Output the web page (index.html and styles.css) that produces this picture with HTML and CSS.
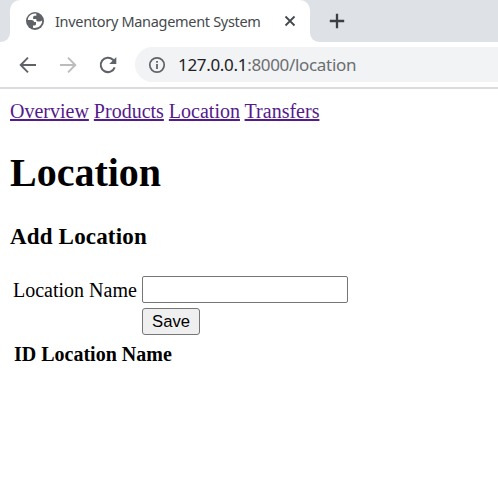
FILE: index.html
```html
<!DOCTYPE html>
<html lang="en">
<head>
<meta charset="utf-8">
<title>Inventory Management System</title>
<link rel="stylesheet" href="styles.css">
</head>
<body>
<header class="browser">
  <div class="tabs">
    <div class="edge edge-left"></div>
    <div class="tab">
      <svg class="globe" viewBox="0 0 20 20"><circle cx="10" cy="10" r="9" fill="#5f6368"/><path d="M11.3 2.7C7.2 2 3.2 5 2.8 8.9h3.7c1.5 0 2.5.8 2.5 2.2h2v1.8c0 .8-.6 1.5-1.5 1.5H8v2.4c3.5 1 7.6-1 8.8-4.7.3-.9.4-1.8.3-2.6-.7.6-1.5.9-2.5.9h-1.8c-.9 0-1.5-.7-1.5-1.6V8.1H8.1V6.4c0-1 .7-1.7 1.7-1.7h1.5z" fill="#fff"/></svg>
      <span class="tab-title">Inventory Management System</span>
      <svg class="close" viewBox="0 0 12 12"><path d="M1.5 1.5l9 9M10.5 1.5l-9 9" stroke="#45494d" stroke-width="1.8"/></svg>
    </div>
    <div class="edge edge-right">
      <svg class="plus" viewBox="0 0 16 16"><path d="M8 .8v14.4M.8 8h14.4" stroke="#3c4043" stroke-width="2.3"/></svg>
    </div>
  </div>
  <div class="toolbar">
    <svg class="nav" viewBox="0 0 18 18"><path d="M17 9H2M9 1.7L1.7 9 9 16.3" fill="none" stroke="#5f6368" stroke-width="1.9"/></svg>
    <svg class="nav" viewBox="0 0 18 18"><path d="M1 9h15M9 1.7L16.3 9 9 16.3" fill="none" stroke="#babcbe" stroke-width="1.9"/></svg>
    <svg class="nav" viewBox="0 0 18 18"><path d="M15.7 11.3A7.2 7.2 0 1 1 14 3.8l1.3 1.4" fill="none" stroke="#5f6368" stroke-width="2"/><path d="M17.3 1v7h-7z" fill="#5f6368"/></svg>
    <div class="address">
      <svg class="info" viewBox="0 0 18 18"><circle cx="9" cy="9" r="7.2" fill="none" stroke="#5f6368" stroke-width="1.7"/><path d="M9 8v5M9 5v1.8" stroke="#5f6368" stroke-width="1.8"/></svg>
      <span class="url"><span class="host">127.0.0.1</span>:8000/location</span>
    </div>
  </div>
</header>
<main>
  <nav><a href="#">Overview</a> <a href="#">Products</a> <a href="#">Location</a> <a href="#">Transfers</a></nav>
  <h1>Location</h1>
  <h3>Add Location</h3>
  <form>
    <label for="name">Location Name</label>
    <input id="name" type="text">
    <button type="button">Save</button>
  </form>
  <div class="list-head"><span>ID</span> <span>Location Name</span></div>
</main>
</body>
</html>
```
FILE: styles.css
```css
* { box-sizing: border-box; }
body { margin: 0; background: #fff; color: #000; font: 20px/23px "Liberation Serif", serif; overflow: hidden; }
svg { display: block; flex: none; }
.browser { height: 89px; border-bottom: 2px solid #dadce0; }
.tabs { display: flex; height: 42px; background: linear-gradient(#dee1e6 0 10px, #fff 10px); }
.edge { background: #dee1e6; }
.edge-left { width: 10px; border-bottom-right-radius: 9px; }
.edge-right { flex: 1; border-bottom-left-radius: 9px; padding: 13px 0 0 19px; }
.tab { width: 300px; display: flex; align-items: center; padding: 0 14px 0 15px; background: #fff; border-radius: 10px 10px 0 0; }
.globe { width: 20px; height: 20px; }
.tab-title { flex: 1; margin-left: 10px; font: 14.5px/20px "Noto Sans", sans-serif; color: #45494d; white-space: nowrap; letter-spacing: -.31px; }
.close { width: 12px; height: 12px; }
.plus { width: 16px; height: 16px; }
.toolbar { display: flex; align-items: center; height: 45px; padding-left: 19px; gap: 22px; }
.nav { width: 18px; height: 18px; }
.address { display: flex; align-items: center; flex: 1; height: 35px; padding-left: 13px; margin-left: -4px; background: #f1f3f4; border-radius: 18px 0 0 18px; }
.info { width: 18px; height: 18px; }
.url { margin-left: 12px; font: 17px/24px "Noto Sans", sans-serif; color: #6b6e72; white-space: nowrap; letter-spacing: -.32px; }
.host { color: #202124; }
main { padding: 11px 10px; }
nav { height: 23px; }
a { color: #551a8b; text-decoration-thickness: 2px; text-underline-offset: 1px; }
h1 { margin: 27px 0; font-size: 40px; line-height: 46px; }
h3 { margin: 0; font-size: 23px; line-height: 27px; letter-spacing: .17px; }
form { display: grid; grid-template-columns: 125px 206px; column-gap: 4px; row-gap: 5px; padding: 26px 0 0 3px; }
input { width: 206px; height: 27px; border: 1px solid #767676; border-radius: 2px; margin: 0; background: #fff; }
label { line-height: 28px; height: 27px; white-space: nowrap; }
button { grid-column: 2; width: 58px; height: 27px; padding: 0; border: 1px solid #767676; border-radius: 3px; background: #efefef; font: 16.67px/24px "Liberation Sans", sans-serif; color: #000; }
.list-head { margin: 8px 0 0 4px; font-weight: bold; white-space: nowrap; }
```
